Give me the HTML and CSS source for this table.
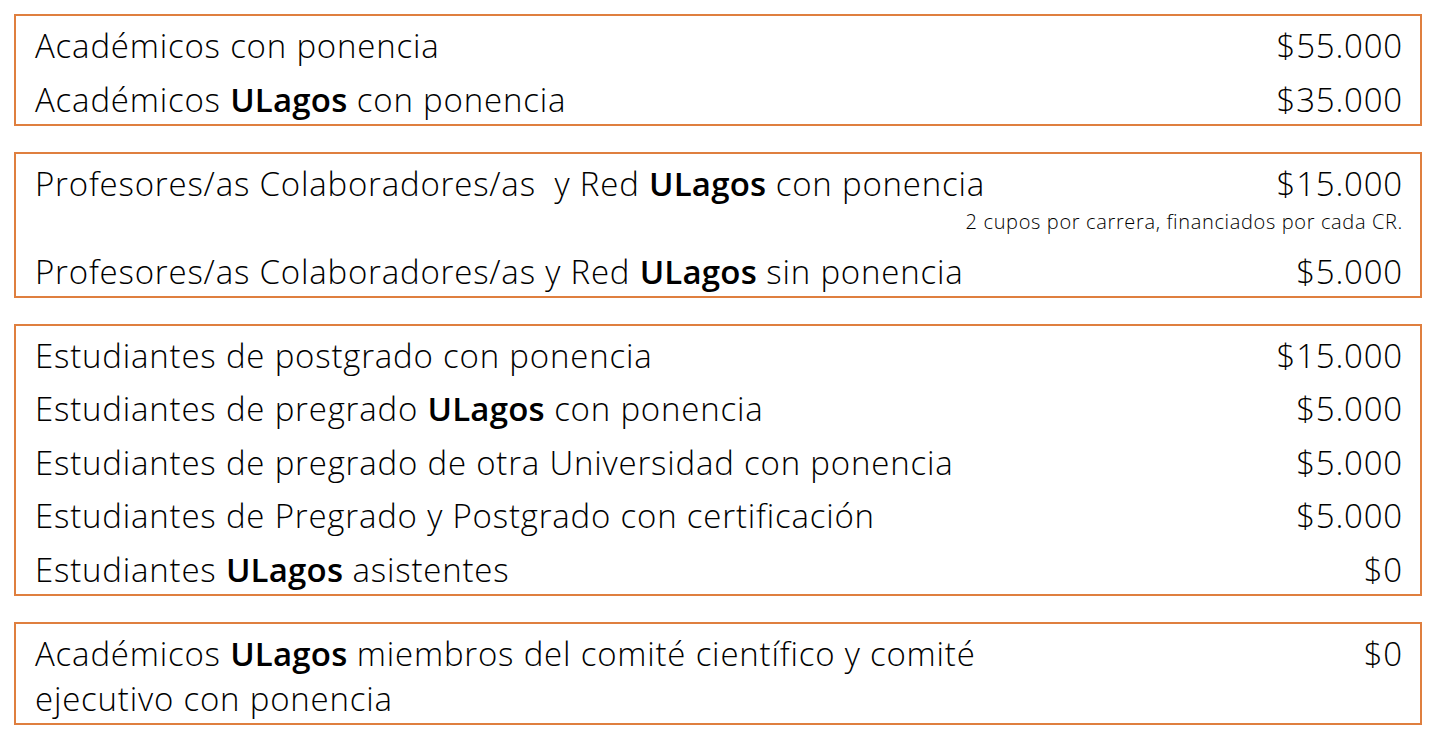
FILE: index.html
```html
<!DOCTYPE html>
<html lang="es">
<head>
<meta charset="utf-8">
<title>Tarifas</title>
<link rel="stylesheet" href="styles.css">
</head>
<body>
<div class="list">
  <section class="box">
    <div class="row"><span class="label">Académicos con ponencia</span><span class="price">$55.000</span></div>
    <div class="row"><span class="label">Académicos <b>ULagos</b> con ponencia</span><span class="price">$35.000</span></div>
  </section>
  <section class="box">
    <div class="row"><span class="label">Profesores/as Colaboradores/as&nbsp; y Red <b>ULagos</b> con ponencia</span><span class="price">$15.000</span></div>
    <div class="note">2 cupos por carrera, financiados por cada CR.</div>
    <div class="row"><span class="label">Profesores/as Colaboradores/as y Red <b>ULagos</b> sin ponencia</span><span class="price">$5.000</span></div>
  </section>
  <section class="box">
    <div class="row"><span class="label">Estudiantes de postgrado con ponencia</span><span class="price">$15.000</span></div>
    <div class="row"><span class="label">Estudiantes de pregrado <b>ULagos</b> con ponencia</span><span class="price">$5.000</span></div>
    <div class="row"><span class="label">Estudiantes de pregrado de otra Universidad con ponencia</span><span class="price">$5.000</span></div>
    <div class="row"><span class="label">Estudiantes de Pregrado y Postgrado con certificación</span><span class="price">$5.000</span></div>
    <div class="row"><span class="label">Estudiantes <b>ULagos</b> asistentes</span><span class="price">$0</span></div>
  </section>
  <section class="box">
    <div class="row"><span class="label">Académicos <b>ULagos</b> miembros del comité científico y comité ejecutivo con ponencia</span><span class="price">$0</span></div>
  </section>
</div>
</body>
</html>
```

FILE: styles.css
```css
html, body {
  margin: 0;
  padding: 0;
  background: #ffffff;
}
body {
  padding: 14px 16px 0 14px;
  font-family: "Open Sans", "Liberation Sans", sans-serif;
  font-weight: 300;
  color: #000000;
}
.list {
  display: flex;
  flex-direction: column;
  gap: 26px;
}
.box {
  border: 2px solid #df7f3f;
  padding: 7px 17px 2px 19px;
}
.row {
  display: flex;
  justify-content: space-between;
  align-items: flex-start;
  font-size: 33px;
  line-height: 45px;
  letter-spacing: 0.8px;
}
.row + .row {
  margin-top: 8.5px;
}
.label {
  max-width: 1000px;
}
.label b {
  font-weight: 600;
  letter-spacing: 0.2px;
}
.price {
  white-space: nowrap;
}
.note {
  text-align: right;
  font-size: 20px;
  line-height: 26px;
  letter-spacing: 0.65px;
  margin: 3.5px 0 13.5px;
}
```
